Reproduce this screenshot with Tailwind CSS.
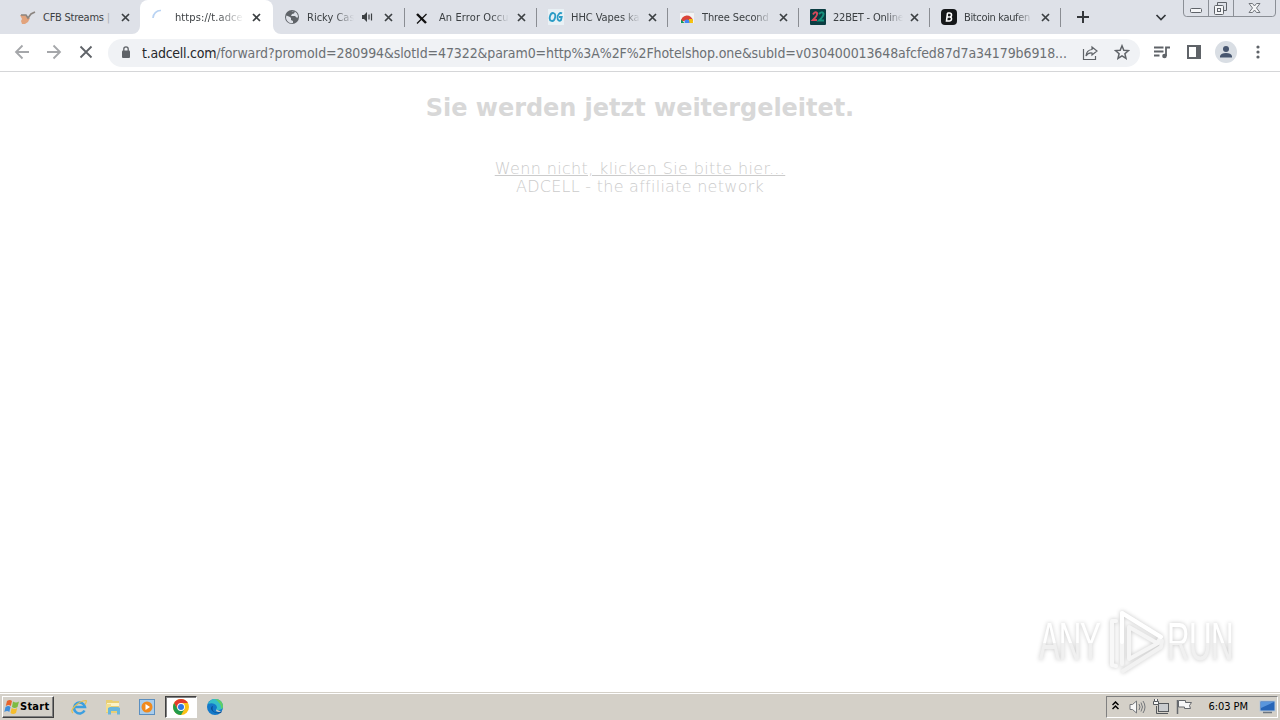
<!DOCTYPE html>
<html lang="de">
  <head>
    <meta charset="UTF-8" />
    <meta name="viewport" content="width=device-width, initial-scale=1.0" />
    <title>t.adcell.com</title>
    <script src="https://cdn.jsdelivr.net/npm/@tailwindcss/browser@4"></script>
  </head>
  <body class="h-screen w-screen overflow-hidden flex flex-col bg-white font-['DejaVu_Sans_Condensed','DejaVu_Sans',sans-serif]">
    <!-- Tab strip -->
    <header class="relative h-[34px] shrink-0 flex bg-[#dee1e8] pl-2 text-[11px] text-[#3c4043]">
      <div class="w-[132px] flex items-center pl-3 pr-2.5">
        <svg class="w-4 h-4 shrink-0" viewBox="0 0 16 16">
          <path d="M0 6h5l3 2 2 1-2 4-3 2H2L1 12l1-2Z" fill="#e2a37c" />
          <path d="M1 6h5l2 3 3-4 4-2" stroke="#8b8580" stroke-width="1.600" fill="none" />
        </svg>
        <span class="ml-[7px] mt-[3px] w-[69px] whitespace-nowrap tracking-[-0.25px]">CFB Streams <span class="text-[#aeb1b7]">|</span></span>
        <svg class="ml-auto w-[9px] h-[9px] shrink-0" viewBox="0 0 9 9"><path d="m1 1 7 7m0-7L1 8" stroke="#3c4043" stroke-width="1.7" /></svg>
      </div>

      <div class="relative w-[133px] -mr-px flex items-center pl-3 pr-[12px] bg-white rounded-t-lg">
        <svg class="absolute -left-2 bottom-0 w-2 h-2" viewBox="0 0 8 8"><path d="M8 0v8H0a8 8 0 0 0 8-8" fill="#fff" /></svg>
        <svg class="absolute -right-2 bottom-0 w-2 h-2" viewBox="0 0 8 8"><path d="M0 0v8h8a8 8 0 0 1-8-8" fill="#fff" /></svg>
        <svg class="w-4 h-4 shrink-0" viewBox="0 0 16 16"><path d="M1 9a7.500 7.500 0 0 1 8-7.500" stroke="#b9d3f3" stroke-width="1.700" fill="none" /></svg>
        <span class="ml-[7px] mt-[3px] w-[69px] whitespace-nowrap tracking-[0.1px] mask-r-from-60%">https://t.adce</span>
        <svg class="ml-auto w-[9px] h-[9px] shrink-0" viewBox="0 0 9 9"><path d="m1 1 7 7m0-7L1 8" stroke="#3c4043" stroke-width="1.7" /></svg>
      </div>

      <div class="w-[132px] flex items-center pl-3 pr-[11px]">
        <svg class="w-4 h-4 shrink-0" viewBox="0 0 16 16">
          <circle cx="8" cy="8" r="7" fill="#5f6368" />
          <path d="M2.500 6.500 6 8l1 1v2l2 1v2l-2 .3A6 6 0 0 1 2 8ZM7 2l4 .5L10 4.500 8 5l-1 2h4l1.500 1.500 1.500 0A6 6 0 0 0 9 2Z" fill="#dee1e8" />
        </svg>
        <span class="ml-[7px] mt-[3px] w-[47px] whitespace-nowrap mask-r-from-60%">Ricky Cas</span>
        <svg class="ml-[8px] w-[11px] h-[10px] shrink-0" viewBox="0 0 11 10">
          <path d="M0 3h2l3-3v10L2 7H0Z" fill="#3c4043" />
          <path d="M7 2.500v5M9.500 1.500v7" stroke="#3c4043" stroke-width="1.200" />
        </svg>
        <svg class="ml-auto w-[9px] h-[9px] shrink-0" viewBox="0 0 9 9"><path d="m1 1 7 7m0-7L1 8" stroke="#3c4043" stroke-width="1.7" /></svg>
      </div>

      <div class="relative w-[132px] flex items-center pl-[11px] pr-2.5">
        <i class="absolute left-0 top-2 w-px h-[19px] bg-[#8a8d93]"></i>
        <svg class="w-4 h-4 shrink-0" viewBox="0 0 16 16">
          <path d="m2 5 9 9" stroke="#111" stroke-width="2.400" />
          <path d="M11.500 5 2 14.500" stroke="#111" stroke-width="1.300" />
        </svg>
        <span class="ml-[8px] mt-[3px] w-[70px] whitespace-nowrap tracking-[0.1px] mask-r-from-75%">An Error Occu</span>
        <svg class="ml-auto w-[9px] h-[9px] shrink-0" viewBox="0 0 9 9"><path d="m1 1 7 7m0-7L1 8" stroke="#3c4043" stroke-width="1.7" /></svg>
      </div>

      <div class="relative w-[131px] flex items-center pl-3 pr-2.5">
        <i class="absolute left-0 top-2 w-px h-[19px] bg-[#8a8d93]"></i>
        <svg class="w-4 h-4 shrink-0" viewBox="0 0 16 16">
          <rect width="16" height="16" fill="#e9f1f5" />
          <g fill="none" stroke="#2b9cc6" stroke-width="1.800">
            <ellipse cx="4.500" cy="8" rx="2.600" ry="4" transform="rotate(15 4.500 8)" />
            <path d="M14 4.500c-2-1.500-4.500 1-4.500 4s2 4 3.500 2.500l.7-3H11" />
          </g>
        </svg>
        <span class="ml-[7px] mt-[3px] w-[69px] whitespace-nowrap tracking-[-0.05px] mask-r-from-75%">HHC Vapes ka</span>
        <svg class="ml-auto w-[9px] h-[9px] shrink-0" viewBox="0 0 9 9"><path d="m1 1 7 7m0-7L1 8" stroke="#3c4043" stroke-width="1.7" /></svg>
      </div>

      <div class="relative w-[131px] flex items-center pl-3 pr-2.5">
        <i class="absolute left-0 top-2 w-px h-[19px] bg-[#8a8d93]"></i>
        <svg class="w-4 h-4 shrink-0" viewBox="0 0 16 16">
          <path d="M1 2h14v12H1Z" fill="#f3f3f4" />
          <path d="M1 2h14v2H1Z" fill="#d8dadd" />
          <path d="M2 13a6 6 0 0 1 12-1l-6-1Z" fill="#db4437" />
          <path d="M2 10.500 5.500 14H2Z" fill="#0f9d58" />
          <path d="M10 10h3.700l.3 4h-4Z" fill="#f4c20d" />
          <circle cx="8" cy="13" r="2.500" fill="#4285f4" />
          <path d="M1 14h14v2H1Z" fill="#dee1e8" />
        </svg>
        <span class="ml-[7px] mt-[3px] w-[69px] whitespace-nowrap tracking-[-0.1px] mask-r-from-75%">Three Second</span>
        <svg class="ml-auto w-[9px] h-[9px] shrink-0" viewBox="0 0 9 9"><path d="m1 1 7 7m0-7L1 8" stroke="#3c4043" stroke-width="1.7" /></svg>
      </div>

      <div class="relative w-[131px] flex items-center pl-3 pr-2.5">
        <i class="absolute left-0 top-2 w-px h-[19px] bg-[#8a8d93]"></i>
        <svg class="w-4 h-4 shrink-0" viewBox="0 0 16 16">
          <rect width="16" height="16" rx="1" fill="#0b3d42" />
          <path d="M3 5.500Q5 2 7 4q1 2-4 7h4" stroke="#d9485a" stroke-width="2" fill="none" />
          <path d="M9 5q3-3 4.500-.5Q14 7 9 11.500h5" stroke="#17917d" stroke-width="2" fill="none" />
        </svg>
        <span class="ml-[7px] mt-[3px] w-[70px] whitespace-nowrap tracking-[-0.2px] mask-r-from-75%">22BET - Online</span>
        <svg class="ml-auto w-[9px] h-[9px] shrink-0" viewBox="0 0 9 9"><path d="m1 1 7 7m0-7L1 8" stroke="#3c4043" stroke-width="1.7" /></svg>
      </div>

      <div class="relative w-[131px] flex items-center pl-3 pr-2.5">
        <i class="absolute left-0 top-2 w-px h-[19px] bg-[#8a8d93]"></i>
        <svg class="w-4 h-4 shrink-0" viewBox="0 0 16 16">
          <rect width="16" height="16" rx="4" fill="#151719" />
          <path d="M6.300 4h2.200q2 0 2 1.900T8.500 8q2.200 0 2 2t-2.200 2H5.500l1-8M6.300 8h2" stroke="#fff" stroke-width="1.600" fill="none" />
        </svg>
        <span class="ml-[7px] mt-[3px] w-[69px] whitespace-nowrap tracking-[-0.35px] mask-r-from-75%">Bitcoin kaufen</span>
        <svg class="ml-auto w-[9px] h-[9px] shrink-0" viewBox="0 0 9 9"><path d="m1 1 7 7m0-7L1 8" stroke="#3c4043" stroke-width="1.7" /></svg>
      </div>

      <div class="relative flex-1 flex items-center pl-[16px]">
        <i class="absolute left-0 top-2 w-px h-[19px] bg-[#8a8d93]"></i>
        <svg class="ml-px w-3 h-3" viewBox="0 0 12 12"><path d="M6 0v12M0 6h12" stroke="#34373b" stroke-width="2" /></svg>
        <svg class="ml-[66px] w-3 h-3" viewBox="0 0 12 12"><path d="m1.500 4 4.500 4.500L10.500 4" stroke="#34373b" stroke-width="1.700" fill="none" /></svg>
      </div>

      <!-- Window buttons -->
      <svg class="absolute left-[1183px] top-0 w-[94px] h-[18px]" viewBox="0 0 94 18" fill="none" stroke="#8b8f96">
        <path d="M.5 0v13q0 3.500 3 3.500h86q3 0 3-3.500V0M25.500 0v16M50.500 0v16" />
        <rect x="7.500" y="8.500" width="11" height="4" rx="1" stroke="#5f6369" fill="#f4f5f7" />
        <path d="M34.500 5V2.500h9v8H41" stroke="#5f6369" />
        <rect x="31.500" y="5.500" width="9" height="9" rx="1" stroke="#5f6369" fill="#f4f5f7" />
        <rect x="34.500" y="8.500" width="3" height="3" stroke="#5f6369" />
        <path d="M66 3.500h3.500l2 2.500 2-2.500H77L73.500 8l3.500 4.500h-3.500l-2-2.500-2 2.500H66L69.500 8Z" stroke="#73777d" fill="#f4f5f7" />
      </svg>
    </header>

    <!-- Toolbar -->
    <div class="h-[38px] shrink-0 flex items-center border-b border-[#d5d6d8] pl-[14px] text-[#5f6368]">
      <svg class="w-4 h-4 -mt-px" viewBox="0 0 16 16"><path d="M15 8H2m6.500-6.500L2 8l6.500 6.500" stroke="#a5a7aa" stroke-width="1.800" fill="none" /></svg>
      <svg class="ml-4 w-4 h-4 -mt-px" viewBox="0 0 16 16"><path d="M1 8h13M7.500 1.500 14 8l-6.500 6.500" stroke="#a5a7aa" stroke-width="1.800" fill="none" /></svg>
      <svg class="ml-4 w-4 h-4 -mt-px" viewBox="0 0 16 16"><path d="m2.500 2.500 11 11m0-11-11 11" stroke="#5f6368" stroke-width="1.800" /></svg>
      <div class="ml-[14px] w-[1032px] h-7 flex items-center rounded-full bg-[#f0f2f5] pl-[13px]">
        <svg class="w-[10px] h-3 -mt-px" viewBox="0 0 10 12">
          <rect x="1" y="4.500" width="8" height="7.500" rx="1" fill="#5f6368" />
          <path d="M2.800 5V3a2.200 2.200 0 0 1 4.400 0v2" stroke="#5f6368" stroke-width="1.300" fill="none" />
        </svg>
        <p class="ml-[11px] w-[926px] mt-px whitespace-nowrap text-[14px] leading-5 tracking-[-0.1px] text-[#6c7074]"><span class="text-[#26282b] tracking-[-0.25px]">t.adcell.com</span>/forward?promoId=280994&amp;slotId=47322&amp;param0=http%3A%2F%2Fhotelshop.one&amp;subId=v030400013648afcfed87d7a34179b6918...</p>
        <svg class="ml-[14px] w-4 h-4" viewBox="0 0 16 16" fill="none" stroke="#5f6368" stroke-width="1.200">
          <path d="M1.500 4v10.500h12V11" />
          <path d="M10 2l5 4-5 4V8Q6 7.500 4 11q.5-6 6-6.500Z" />
        </svg>
        <svg class="ml-4 w-4 h-4 -mt-px" viewBox="0 0 16 16"><path d="m8 1.800 1.800 4.400 4.700.4-3.600 3.100 1.100 4.600L8 11.800l-4 2.500 1.100-4.600-3.600-3.100 4.700-.4Z" stroke="#5f6368" stroke-width="1.500" fill="none" /></svg>
      </div>
      <svg class="ml-[13px] w-[17px] h-4 -mt-px" viewBox="0 0 17 16">
        <path d="M1 3.500h9.500M1 7.500h9.500M1 11.500h5.500M13 12V3.500h4" stroke="#5f6368" stroke-width="1.800" fill="none" />
        <circle cx="11.500" cy="12" r="2.300" fill="#5f6368" />
      </svg>
      <svg class="ml-[17px] w-[14px] h-[14px] -mt-px" viewBox="0 0 14 14">
        <rect x="1" y="1" width="12" height="12" fill="none" stroke="#5f6368" stroke-width="2" />
        <path d="M9 0h5v14H9Z" fill="#5f6368" />
      </svg>
      <svg class="ml-[14px] w-[22px] h-[22px] -mt-px" viewBox="0 0 22 22">
        <circle cx="11" cy="11" r="11" fill="#d9dee4" />
        <circle cx="11" cy="8" r="3" fill="#47566f" />
        <path d="M5 16.500v-1.500q1-3 6-3t6 3v1.500Z" fill="#47566f" />
      </svg>
      <svg class="ml-[19px] w-1 h-[14px] -mt-px" viewBox="0 0 4 14" fill="#5f6368">
        <circle cx="2" cy="2" r="1.600" /><circle cx="2" cy="7" r="1.600" /><circle cx="2" cy="12" r="1.600" />
      </svg>
    </div>

    <!-- Page -->
    <main class="relative flex-1 text-center text-[#cbcbcb] font-['DejaVu_Sans',sans-serif]">
      <h1 class="mt-[20px] text-[24px] leading-8 font-bold tracking-[-0.05px] text-[#d8d8d8]">Sie werden jetzt weitergeleitet.</h1>
      <p class="mt-[36px] text-[16px] leading-[18px] font-extralight">
        <a class="underline tracking-[0.36px]" href="#">Wenn nicht, klicken Sie bitte hier...</a><br /><span class="tracking-[0.27px]">ADCELL - the affiliate network</span>
      </p>

      <!-- Watermark -->
      <svg class="absolute left-[1030px] top-[532px] w-[212px] h-[76px] drop-shadow-[0_0_2px_rgba(0,0,0,0.22)]" viewBox="0 0 212 76">
        <defs>
          <linearGradient id="fade" gradientUnits="userSpaceOnUse" x1="0" y1="-38" x2="0" y2="0">
            <stop offset=".55" stop-color="#fff" />
            <stop offset=".55" stop-color="#f0f0f0" />
          </linearGradient>
        </defs>
        <g fill="url(#fade)" font-family="Liberation Sans, sans-serif" font-size="53">
          <text transform="translate(9 56) scale(.59 1)" textLength="105" lengthAdjust="spacing">ANY</text>
          <text transform="translate(137 56) scale(.59 1)" textLength="113" lengthAdjust="spacing">RUN</text>
        </g>
        <g fill="none" stroke-linejoin="round" stroke-linecap="round" stroke-width="4">
          <path d="M86 17h-4v44l4 1" stroke="#f8f8f8" />
          <path d="M92 60V9l39 24-4 6-28-16v32l31-17" stroke="#f5f5f5" />
          <path d="M93 67l38-24 1-6" stroke="#f2f2f2" />
          <path d="M92 38V9l39 24" stroke="#fff" />
        </g>
      </svg>
    </main>

    <!-- Taskbar -->
    <footer class="h-[28px] shrink-0 flex items-center border-t border-[#d4d0c8] bg-[#d4d0c8] pl-0.5 pr-0.5 text-[11px] text-black shadow-[inset_0_1px_0_#fff]">
      <div class="h-[22px] w-[52px] flex items-center border border-t-white border-l-white border-r-[#404040] border-b-[#404040] shadow-[inset_-1px_-1px_0_#808080] pl-px">
        <svg class="w-4 h-4 shrink-0" viewBox="0 0 16 16">
          <path d="M3 2q3-2 5 0L6.800 7q-2-2-5 0Z" fill="#e8642c" />
          <path d="M9 2.500q3 2 6 0L13.500 8q-3 2-5.500 0Z" fill="#7dbb42" />
          <path d="M1.500 8q3-2 5 0l-1.200 5q-2-2-5 0Z" fill="#3f8edb" />
          <path d="M7.700 9q3 2 5.500 0L12 14q-3 2-5.500 0Z" fill="#f5bd2c" />
        </svg>
        <b class="mt-0.5 tracking-[0.25px]">Start</b>
      </div>
      <svg class="ml-[17px] w-4 h-4" viewBox="0 0 16 16" fill="none">
        <path d="M13.500 11.500A5.500 5.500 0 1 1 14 8H4" stroke="#3c9fe0" stroke-width="2.500" />
        <path d="M2 14Q-1 12 4 7T15 1.500q1 1-1 4" stroke="#e9c04b" stroke-width="1.200" />
      </svg>
      <svg class="ml-[18px] w-4 h-4" viewBox="0 0 16 16">
        <path d="M1 1h6l1 1h6v12H1Z" fill="#e9cf74" />
        <path d="M2 4h12v3H2Z" fill="#fbf3c8" />
        <path d="M1 5h5v8H1Z" fill="#f3df8e" />
        <path d="M3 15.500V9l2-1h8l2 1v6.500h-3V12H6v3.500Z" fill="#69b6dc" />
      </svg>
      <svg class="ml-[18px] w-4 h-4" viewBox="0 0 16 16">
        <rect x=".5" y=".5" width="15" height="15" fill="#a9cdec" stroke="#5b8fc0" />
        <circle cx="8" cy="8" r="5.500" fill="#f08a1d" />
        <path d="m6.500 5 4.500 3-4.500 3Z" fill="#fff" />
      </svg>
      <div class="ml-[10px] h-[22px] w-8 flex items-center justify-center bg-white border border-t-[#404040] border-l-[#404040] border-r-white border-b-white shadow-[inset_1px_1px_0_#808080]">
        <svg class="w-4 h-4" viewBox="0 0 16 16">
          <circle cx="8" cy="8" r="8" fill="#fbc116" />
          <path d="M8 4h6.900A8 8 0 0 0 1.100 4L4.500 10 8 8Z" fill="#e33b2e" />
          <path d="M1.100 4A8 8 0 0 0 8 16l3.500-6L8 8l-3.500 2Z" fill="#229b4b" />
          <circle cx="8" cy="8" r="3.900" fill="#fff" />
          <circle cx="8" cy="8" r="3" fill="#2f77e5" />
        </svg>
      </div>
      <svg class="ml-[10px] w-4 h-4" viewBox="0 0 16 16">
        <circle cx="8" cy="8" r="8" fill="#1479c9" />
        <path d="M1 5Q3 0 8 0q7 0 8 7 0 4-5 4-2 0-2-1 2-1 0-4Q6 3 1 5Z" fill="#35bfc9" />
        <path d="M8 0q7 0 8 7 0 2-1.500 3.200Q14 4 8 0Z" fill="#62cf64" />
        <path d="M6 7q-2 5 3 6.500 3 .5 6-1.500l-1 2q-8 1-10-4 0-3 2-3Z" fill="#0b4e94" />
        <path d="M9 10.500Q8.800 13 12 13t4-2l0 1-2 .5Z" fill="#d4d0c8" />
      </svg>

      <!-- Tray -->
      <div class="ml-auto h-[22px] w-[172px] flex items-center border border-t-[#808080] border-l-[#808080] border-r-white border-b-white pl-[5px] pr-px">
        <svg class="w-[7px] h-[9px] -mt-0.5" viewBox="0 0 7 9"><path d="m.5 4 3-3 3 3m-6 4 3-3 3 3" stroke="#000" stroke-width="1.500" fill="none" /></svg>
        <svg class="ml-[10px] w-[17px] h-4" viewBox="0 0 17 16" fill="none" stroke="#74777b">
          <path d="M1 5.500h2.500L7.500 2v12l-4-3.500H1Z" fill="#f7f7f7" />
          <path d="M10 5q2 3 0 6M12 3.500q3 4.500 0 9M14 2q4 6 0 12" />
        </svg>
        <svg class="ml-[7px] w-4 h-4" viewBox="0 0 16 16" stroke="#55585c">
          <rect x="5.500" y="4.500" width="10" height="8" fill="#c9cccf" />
          <path d="M6 14.500h9M3.500 7v7.500h4" fill="none" />
          <path d="M1.500 0v2.500h-1v3h5v-3h-1V0m-3 2.500h3" fill="#f7f7f7" />
        </svg>
        <svg class="ml-[7px] w-4 h-4" viewBox="0 0 16 16" stroke="#66696d">
          <path d="M2.500 1.500h7v2h6l-2 3 1 3h-6v-1.500h-6Z" fill="#f7f7f7" />
          <path d="M1.500 1v14" stroke-width="1.500" />
        </svg>
        <span class="mt-0.5 ml-auto mr-[11px] whitespace-nowrap tracking-[-0.05px]">6:03 PM</span>
        <svg class="w-[17px] h-4" viewBox="0 0 17 16">
          <rect x="1" y="2" width="15" height="10" fill="#2866b8" stroke="#b5c8dc" />
          <path d="M2 3h13L2 9Z" fill="#5a96dc" />
          <path d="M4 13.500h9" stroke="#6d7680" stroke-width="1.500" />
        </svg>
      </div>
    </footer>
  </body>
</html>
